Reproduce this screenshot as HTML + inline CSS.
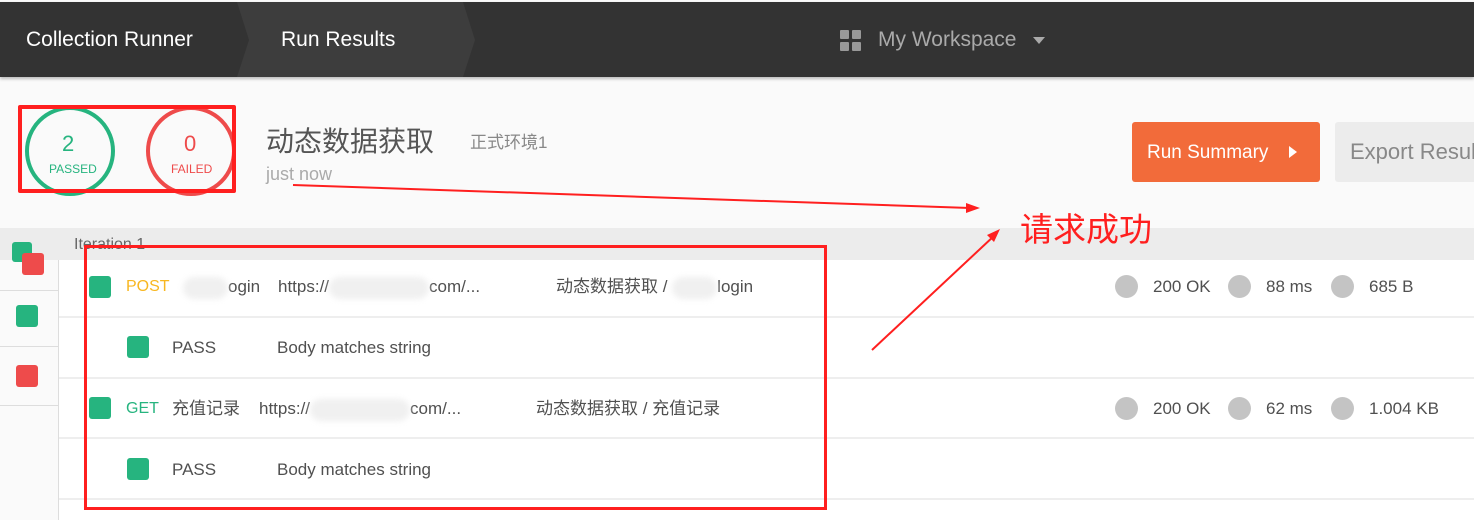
<!DOCTYPE html><html><head><meta charset="utf-8"><style>
body{margin:0;width:1474px;height:512px;overflow:hidden;background:#fafafa;font-family:"Liberation Sans","Noto Sans CJK SC",sans-serif;position:relative}
.a{position:absolute;line-height:22px;white-space:nowrap}
.sq{position:absolute;width:22px;height:22px;border-radius:3px;background:#26b47f}
.g{color:#999}.t{font-size:17px;color:#505050}
.dot{position:absolute;width:23px;height:23px;border-radius:50%;background:#c4c4c4}
.bl{display:inline-block;vertical-align:middle;height:22px;background:#f0f0f0;border-radius:11px;filter:blur(3px)}
</style></head><body>
<div class="a" style="left:0;top:2px;width:1474px;height:75px;background:#333;box-shadow:0 2px 3px rgba(0,0,0,.25)"></div>
<svg class="a" style="left:0;top:2px" width="1474" height="75"><polygon points="237,0 463,0 475,38 463,75 237,75 249,38" fill="#3d3d3d"/></svg>
<div class="a" style="left:26px;top:29px;color:#fff;font-size:21px">Collection Runner</div>
<div class="a" style="left:281px;top:29px;color:#fff;font-size:21px">Run Results</div>
<div class="a" style="left:840px;top:30px;width:9px;height:9px;background:#999;box-shadow:12px 0 #999,0 12px #999,12px 12px #999;border-radius:1px"></div>
<div class="a" style="left:878px;top:29px;color:#aaa;font-size:21px">My Workspace</div>
<div class="a" style="left:1033px;top:37px;border:6px solid transparent;border-top:7px solid #aaa"></div>
<div class="a" style="left:25px;top:106px;width:90px;height:90px;border:4px solid #26b47f;border-radius:50%;box-sizing:border-box"></div>
<div class="a" style="left:146px;top:106px;width:90px;height:90px;border:4px solid #ee4b4b;border-radius:50%;box-sizing:border-box"></div>
<div class="a" style="left:62px;top:133px;color:#26b47f;font-size:22px">2</div>
<div class="a" style="left:49px;top:158px;color:#26b47f;font-size:12px">PASSED</div>
<div class="a" style="left:184px;top:133px;color:#ee4b4b;font-size:22px">0</div>
<div class="a" style="left:171px;top:158px;color:#ee4b4b;font-size:12px">FAILED</div>
<div class="a" style="left:18px;top:105px;width:218px;height:88px;border:4px solid #ff1f1f;box-sizing:border-box;border-radius:2px"></div>
<div class="a" style="left:266px;top:124px;font-size:28px;line-height:36px;color:#555">动态数据获取</div>
<div class="a" style="left:470px;top:132px;font-size:17px;color:#888">正式环境1</div>
<div class="a" style="left:266px;top:163px;font-size:18px;color:#aaa">just now</div>
<div class="a" style="left:1132px;top:122px;width:188px;height:60px;background:#f26b3a;border-radius:3px"></div>
<div class="a" style="left:1147px;top:142px;color:#fff;font-size:19px">Run Summary</div>
<div class="a" style="left:1289px;top:146px;border:6px solid transparent;border-left:8px solid #fff"></div>
<div class="a" style="left:1335px;top:122px;width:150px;height:60px;background:#ececec;border-radius:3px"></div>
<div class="a" style="left:1350px;top:141px;color:#888;font-size:22px">Export Results</div>
<div class="a" style="left:0;top:228px;width:1474px;height:32px;background:#ececec"></div>
<div class="a" style="left:0;top:260px;width:58px;height:260px;background:#fafafa"></div>
<div class="a" style="left:0;top:290px;width:58px;height:1px;background:#ddd"></div>
<div class="a" style="left:0;top:346px;width:58px;height:1px;background:#ddd"></div>
<div class="a" style="left:0;top:405px;width:58px;height:1px;background:#ddd"></div>
<div class="a" style="left:58px;top:260px;width:1px;height:260px;background:#ddd"></div>
<div class="a" style="left:59px;top:260px;width:1415px;height:260px;background:#fff"></div>
<div class="a" style="left:59px;top:316px;width:1415px;height:2px;background:#eee"></div>
<div class="a" style="left:59px;top:377px;width:1415px;height:2px;background:#eee"></div>
<div class="a" style="left:59px;top:437px;width:1415px;height:2px;background:#eee"></div>
<div class="a" style="left:59px;top:498px;width:1415px;height:2px;background:#eee"></div>
<div class="sq" style="left:12px;top:242px;width:20px;height:20px"></div>
<div class="sq" style="left:22px;top:253px;background:#ee4b4b"></div>
<div class="sq" style="left:16px;top:305px"></div>
<div class="sq" style="left:16px;top:365px;background:#ee4b4b"></div>
<div class="a" style="left:74px;top:234px;font-size:16px;color:#666">Iteration 1</div>
<div class="sq" style="left:89px;top:276px"></div>
<div class="a" style="left:126px;top:276px;font-size:16px;color:#f8b721">POST</div>
<div class="a t" style="left:183px;top:276px"><span class="bl" style="width:45px"></span>ogin</div>
<div class="a t g" style="left:278px;top:276px">https://<span class="bl" style="width:100px"></span>com/...</div>
<div class="a t g" style="left:556px;top:276px">动态数据获取 / <span class="bl" style="width:45px"></span>login</div>
<div class="sq" style="left:127px;top:336px"></div>
<div class="a t" style="left:172px;top:337px">PASS</div>
<div class="a t" style="left:277px;top:337px">Body matches string</div>
<div class="sq" style="left:89px;top:397px"></div>
<div class="a" style="left:126px;top:398px;font-size:16px;color:#26b47f">GET</div>
<div class="a t" style="left:172px;top:398px">充值记录</div>
<div class="a t g" style="left:259px;top:398px">https://<span class="bl" style="width:100px"></span>com/...</div>
<div class="a t g" style="left:536px;top:398px">动态数据获取 / 充值记录</div>
<div class="sq" style="left:127px;top:458px"></div>
<div class="a t" style="left:172px;top:459px">PASS</div>
<div class="a t" style="left:277px;top:459px">Body matches string</div>
<div class="dot" style="left:1115px;top:275px"></div><div class="a t" style="left:1153px;top:276px">200 OK</div>
<div class="dot" style="left:1228px;top:275px"></div><div class="a t" style="left:1266px;top:276px">88 ms</div>
<div class="dot" style="left:1331px;top:275px"></div><div class="a t" style="left:1369px;top:276px">685 B</div>
<div class="dot" style="left:1115px;top:397px"></div><div class="a t" style="left:1153px;top:398px">200 OK</div>
<div class="dot" style="left:1228px;top:397px"></div><div class="a t" style="left:1266px;top:398px">62 ms</div>
<div class="dot" style="left:1331px;top:397px"></div><div class="a t" style="left:1369px;top:398px">1.004 KB</div>
<div class="a" style="left:84px;top:245px;width:743px;height:265px;border:3px solid #ff1f1f;box-sizing:border-box"></div>
<svg class="a" style="left:0;top:0" width="1474" height="512"><g stroke="#ff1f1f" stroke-width="2" fill="#ff1f1f"><line x1="293" y1="185" x2="970" y2="208"/><polygon points="980,208 966,203 966,213" stroke="none"/><line x1="872" y1="350" x2="995" y2="235"/><polygon points="1000,229 987,235 994,242" stroke="none"/></g></svg>
<div class="a" style="left:1020px;top:210px;font-size:33px;line-height:40px;color:#ff1f1f">请求成功</div>
</body></html>
